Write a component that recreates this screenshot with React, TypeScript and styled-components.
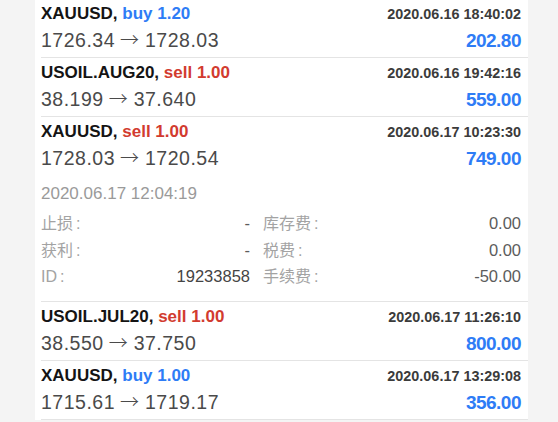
import styled, { createGlobalStyle } from "styled-components";

const GlobalStyle = createGlobalStyle`
  html, body {
    margin: 0;
    padding: 0;
    background: #f4f4f4;
  }
  body {
    font-family: "Liberation Sans", "Noto Sans CJK SC", sans-serif;
  }
`;

const Page = styled.div`
  height: 422px;
  overflow: hidden;
`;

const Panel = styled.div`
  margin-top: -1px;
  margin-left: 35px;
  width: 493px;
  background: #fff;
`;

const Row = styled.div<{ $expanded?: boolean }>`
  margin-left: 6px;
  padding: 2px 7px 0 0;
  height: ${(p) => (p.$expanded ? 182 : 56)}px;
  border-bottom: 1px solid #e4e4e4;
`;

const TopLine = styled.div`
  display: flex;
  justify-content: space-between;
  align-items: baseline;
  height: 26px;
  line-height: 26px;
`;

const BottomLine = styled.div`
  display: flex;
  justify-content: space-between;
  align-items: baseline;
  height: 24px;
  line-height: 24px;
`;

const Title = styled.span`
  font-size: 17px;
  font-weight: bold;
  color: #141414;
`;

const Side = styled.span<{ $side: "buy" | "sell" }>`
  color: ${(p) => (p.$side === "buy" ? "#2e7cf6" : "#d23b2f")};
`;

const Time = styled.span`
  font-size: 14.4px;
  font-weight: bold;
  color: #3b3b3b;
`;

const Price = styled.span`
  font-size: 19.5px;
  letter-spacing: 0.5px;
  color: #4a4a4a;
`;

const Arrow = styled.span`
  margin: 0 6px 0 5px;
  font-family: "Noto Sans CJK SC", sans-serif;
  font-size: 19px;
  font-weight: 300;
  letter-spacing: 0;
`;

const Profit = styled.span`
  font-size: 19px;
  font-weight: bold;
  letter-spacing: -0.5px;
  color: #2e7cf6;
`;

const OpenTime = styled.div`
  margin-top: 13px;
  height: 24px;
  line-height: 24px;
  font-size: 17px;
  color: #9a9a9a;
`;

const DetailGrid = styled.div`
  margin-top: 4px;
  display: grid;
  grid-template-columns: 209px 1fr;
  grid-auto-rows: 26.5px;
  column-gap: 13px;
`;

const Cell = styled.div`
  display: flex;
  justify-content: space-between;
  align-items: baseline;
  line-height: 26.5px;
`;

const Label = styled.span`
  font-size: 16px;
  color: #a3a3a3;
`;

const Colon = styled.span`
  margin-left: 3px;
`;

const Value = styled.span<{ $dark?: boolean }>`
  font-size: 16.5px;
  color: ${(p) => (p.$dark ? "#444" : "#5c5c5c")};
`;

type Trade = {
  symbol: string;
  side: "buy" | "sell";
  volume: string;
  time: string;
  open: string;
  close: string;
  profit: string;
  details?: {
    openTime: string;
    cells: { label: string; value: string; dark?: boolean }[];
  };
};

const trades: Trade[] = [
  { symbol: "XAUUSD", side: "buy", volume: "1.20", time: "2020.06.16 18:40:02", open: "1726.34", close: "1728.03", profit: "202.80" },
  { symbol: "USOIL.AUG20", side: "sell", volume: "1.00", time: "2020.06.16 19:42:16", open: "38.199", close: "37.640", profit: "559.00" },
  {
    symbol: "XAUUSD",
    side: "sell",
    volume: "1.00",
    time: "2020.06.17 10:23:30",
    open: "1728.03",
    close: "1720.54",
    profit: "749.00",
    details: {
      openTime: "2020.06.17 12:04:19",
      cells: [
        { label: "止损", value: "-" },
        { label: "库存费", value: "0.00" },
        { label: "获利", value: "-" },
        { label: "税费", value: "0.00" },
        { label: "ID", value: "19233858", dark: true },
        { label: "手续费", value: "-50.00" },
      ],
    },
  },
  { symbol: "USOIL.JUL20", side: "sell", volume: "1.00", time: "2020.06.17 11:26:10", open: "38.550", close: "37.750", profit: "800.00" },
  { symbol: "XAUUSD", side: "buy", volume: "1.00", time: "2020.06.17 13:29:08", open: "1715.61", close: "1719.17", profit: "356.00" },
];

function TradeRow({ trade }: { trade: Trade }) {
  return (
    <Row $expanded={!!trade.details}>
      <TopLine>
        <Title>
          {trade.symbol}, <Side $side={trade.side}>{trade.side} {trade.volume}</Side>
        </Title>
        <Time>{trade.time}</Time>
      </TopLine>
      <BottomLine>
        <Price>
          {trade.open}
          <Arrow>→</Arrow>
          {trade.close}
        </Price>
        <Profit>{trade.profit}</Profit>
      </BottomLine>
      {trade.details && (
        <>
          <OpenTime>{trade.details.openTime}</OpenTime>
          <DetailGrid>
            {trade.details.cells.map((c) => (
              <Cell key={c.label}>
                <Label>
                  {c.label}
                  <Colon>:</Colon>
                </Label>
                <Value $dark={c.dark}>{c.value}</Value>
              </Cell>
            ))}
          </DetailGrid>
        </>
      )}
    </Row>
  );
}

export default function App() {
  return (
    <Page>
      <GlobalStyle />
      <Panel>
        {trades.map((t, i) => (
          <TradeRow key={i} trade={t} />
        ))}
      </Panel>
    </Page>
  );
}
